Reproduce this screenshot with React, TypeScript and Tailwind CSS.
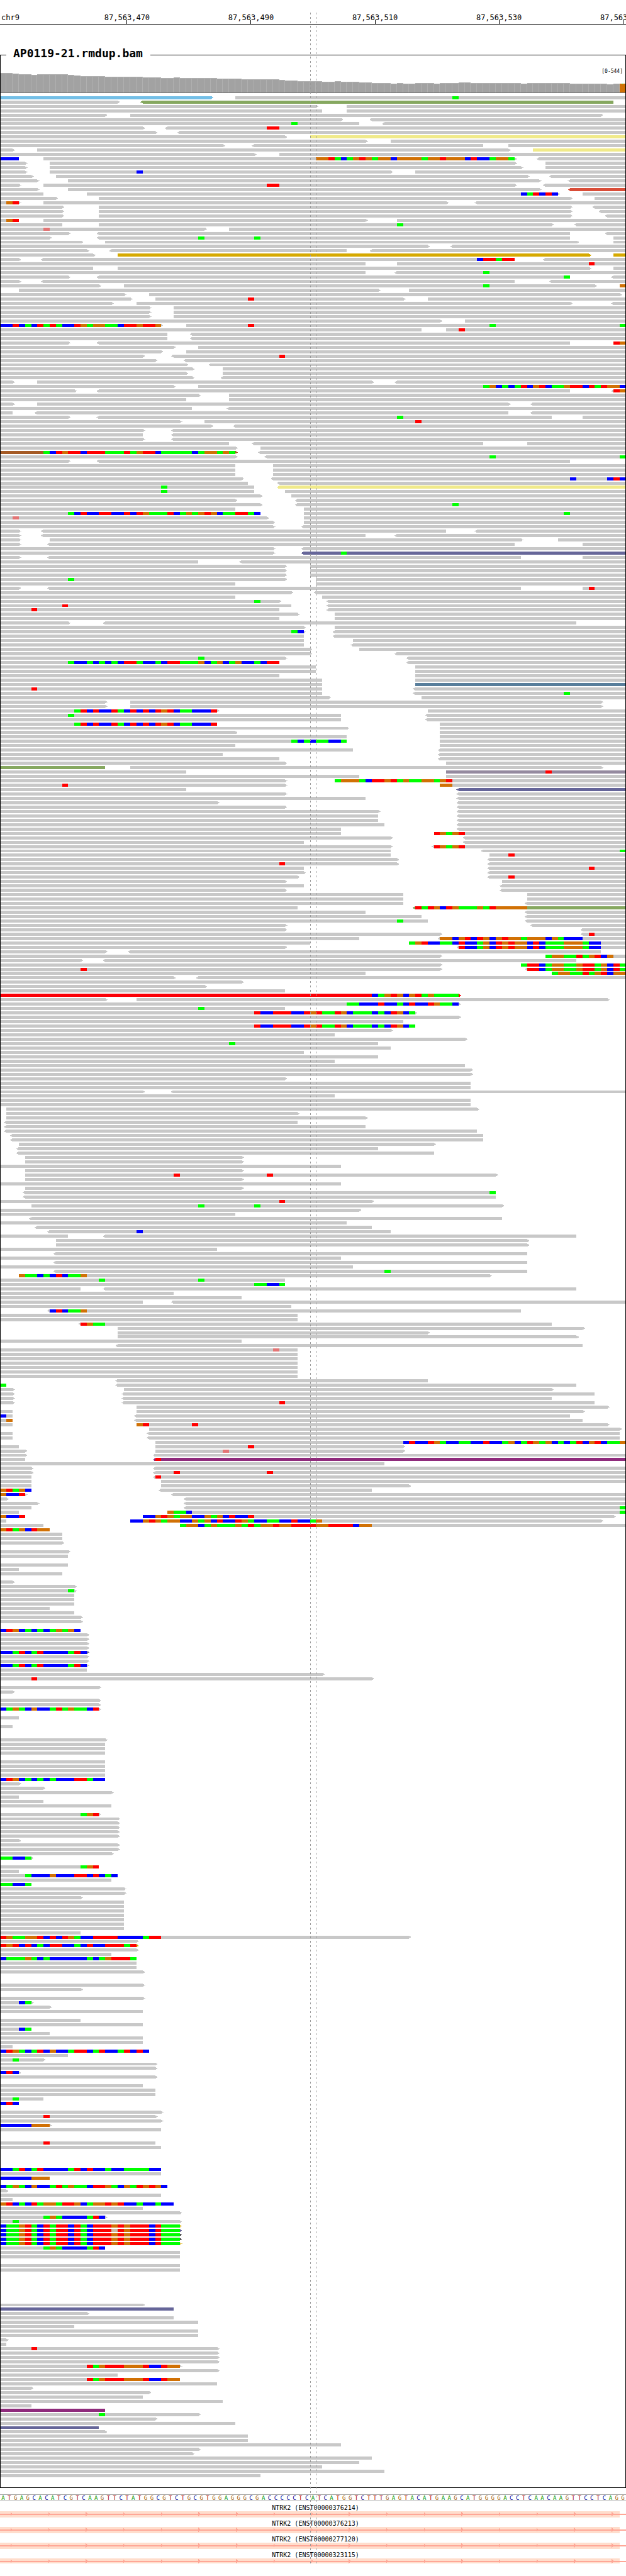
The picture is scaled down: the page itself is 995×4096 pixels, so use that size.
import React from "react";

const BASES = 101;
const VIEW_WIDTH = 1000;
const ROW_PITCH = 7;
const ROW_HEIGHT = 5;
const CHART_TOP = 98;
const CHART_BOTTOM = 3976;
const FIRST_ROW = 154;

const BASE_COLORS: Record<string, string> = {
  A: "#00ff00",
  C: "#0000ff",
  G: "#d17105",
  T: "#ff0000",
  t: "#e37575",
  g: "#ccb8a1",
};

const READ_COLORS: Record<string, string> = {
  sky: "#73bfe7",
  olive: "#86a860",
  khaki: "#f0ea8a",
  gold: "#d6a900",
  coral: "#d94d38",
  slate: "#666699",
  steel: "#587e9b",
  mauve: "#958a9f",
  plum: "#8f2b7c",
  brown: "#a55a24",
  crimson: "#fb0007",
  sand: "#e6cc62",
  coal: "#555555",
};

/*
 * Pileup rows, separated by "|".
 *   a-b       read covering bases a up to b; "<" or ">" marks its strand end
 *   :name     read colour, grey when absent
 *   @nSEQ     mismatched bases starting at n
 *   *n        repeat the row n times
 */
const PILEUP = `
0-34>:sky 38-101 @73A|0-19> <23-99:olive|0-51> 56-101|0-52 56-101|0-17> 21-97>|0-55> <60-101|0-58 <62-101 @47A|0-23> <27-101 @43TT
|0-25> <29-101|0-46> 50-101:khaki|0-59> 63-101|0-36> <41-78 82-101|0-2> 6-82> 86-101:khaki|0-41> 45-101
|0-3 7-83> <87-101 @0CCC @51GGTACAGTGAGGCGGGGAGGTGGGCTCCAGGA|0-4> 8-83> 88-101|0-4> 8-84> 88-101|0-4> 8-63> 67-101 @22C
|0-5> 9-85> <89-101|0-6> 11-87> <92-101|0-3> 7-83> <88-101 @43TT|0-6> 11-87> <92-101:coral|0-7 14-90> 94-101 @84CATCTC
|0-9> 16-92> 96-101|0-3> 7-72> <77-101 @1GT|0-10> 16-92> <96-101|0-10> 16-92> <97-101|0-10> 16-92> <98-101|0-3 7-59> 64-101 @1GT
|0-10 16-89> <93-101 @64A|0-33> 37-101 @7t|0-11> <16-92 <98-101|0-8> <16-92 99-101 @32A @41A|0-13> 17-93> 99-101|0-69> <73-101
|0-14> <18-56 <60-101|0-15> 19-95>:gold 99-101:gold|0-3> <7-83 <88-101 @77CTTATT|0-59 64-101 @95T|0-15 19-95> 99-101
|0-59 <64-101 @78A|0-11> <16-92 <99-101 @91A|0-3> <7-83 <89-101|0-16> 20-96> 100-101 @78A @100G|3-61> 66-101|0-20> 24-100>
|0-21> 25-65> 69-101 @40T|0-18> 22-92> <99-101|0-24> 28-101 *3|0-71> 75-101
|0-26> 30-101 @0CCTCACTATACCTGAGGAACTTGTTG @40T @79A @100A|0-68 72-101 @74T|0-27 <31-101 *2|0-11> <16-92 99-101 @99TG
|0-28> 32-101|0-26> 30-101|0-23> <28-101 @45T|0-25> <30-101|0-30> <34-101|0-31> 36-101|0-30> 36-101|0-31> <36-101
|0-2> 6-60> <64-101|0-28> 32-101 @78AGCACATCGTCAAGTTCTATGGC|0-12> <16-92 <99-101 @99TG|0-32> 37-101|0-30 37-101
|0-2> 6-82> <86-101|0-31 <37-101|0-2 <6-82 <86-101|0-11> <16-89 94-101 @64A|0-29> 33-101 @67T|0-34> <38-101
|0-23> <28-101|0-23 <28-101|0-23> <28-101|0-37 <41-78 85-101|0-38> 42-101
|0-38>:brown <42-101 @7ACTGTTCTTTAAATAGTTCAAAAACAGGAGA|0-38> <43-101 @79A @100A|0-11> <16-92|0-38 44-101 *3
|0-39> <44-101 @92C @98CTC|0-40 <45-101|0-41 <45-101:khaki @26A|0-41 46-101 @26A|0-42> 47-101|0-38> <48-101
|0-42> <48-101 @73A|0-38 49-101|0-42 49-101 @91A @11ACTCCTTCCTCTGAAATCAGAGTGCAATTAC|0-43> 49-101 @2t|0-44> 49-101
|0-44> <49-101|0-3> <7-72 <77-101|0-3> <7-59 <64-101|0-3> 8-84> 90-101|0-3> <8-83 94-101|0-44> <49-101
|0-44> <49-101:slate @55A|0-3> <8-84 94-101|0-32 <39-101|0-46> 50-101 *3|0-46> 51-101 @11A|0-38 51-101
|0-3> <8-84 94-101 @95T|0-47> <51-101|0-38 52-101|0-45> <53-101 @41A|0-47 <53-101 @10T|0-45 <53-101 @5T|0-48> 54-101
|0-45 54-101|0-11> <17-93|0-49> 54-101|0-49> <54-101 @47AC|0-49 <54-101|0-49 57-101|0-49 <57-101|0-50> 58-101|0-50> <64-101
|0-46> <66-101 @32A|0-45 <66-101 @11ACCACACACTTACCACTTAAAGCAGCAGCCACTT|0-51 67-101 *2|0-45 67-101|0-52 67-101|0-52 67-101:steel
|0-52 <67-101 @5T|0-52 <67-101 @91A|0-53> 68-101|0-17> 21-97> *2|0-35> 69-101 @12ATCTCCTACTCTCTGTCAACCCT
|0-55 <69-101 @11A|0-55 <69-101|0-35 71-101 @12ATCTCCTACTCTCTGTCAACCCT|0-56> 71-101|0-38> 71-101|0-56 71-101
|0-56 71-101 @47ACACAACCA|0-38 71-101|0-57 <71-101|0-36 <71-101|0-45 <71-101|0-46> 72-101|0-17:olive 21-97>
|0-30 72-101:mauve @88T|0-58 72-101|0-46> 54-101 @54AGGGACTTGTAGAAGGAGT|0-46> 71-101 @71GG @10T|0-30 <74-101:slate
|0-46> <74-101|0-59 <74-101|0-35> <74-101|0-46> <74-101|0-61> <74-101|0-61 <74-101 *2|0-62 <74-101|0-55 <74-101
|0-55 70-101 @70TGAGT|0-63> <75-101|0-49 <75-101|0-63> <70-101 @70TGAGT|0-63 <78-101 @100A|0-63 79-101 @82T
|0-64> <79-101|0-64> <79-101 @45T|0-49 <79-101 @95T|0-49> <79-101|0-48> <79-101 @82T|0-46> 81-101|0-49 <81-101
|0-46> <81-101|0-65 85-101 *2|0-65 <85-101|0-48 <67-101:olive @67TATGCTGAAAGATGGGGG|0-59 <85-101|0-68 <85-101
|0-69 <85-101 @64A|0-46> <86-101|0-46> <94-101|0-71> <94-101 @95T|0-58 <71-101 @71GGCGTCTGCGTGGAGGGCGACCC
|0-50 66-101 @66AGTCCAACTCCAGCTGTGGCTCAAAGGGACC|0-46> <74-101 @74TCCAGCTGTGGCTCAAAGGGACC|0-17> <21-97
|0-71> 88-101 @88AGGAATAGTCG|0-13> <17-93|0-71> 84-101 @84ATTCAGGAAGTTAGCTA|0-71> <85-101 @13T @85TTCAGGAAGTTAGCTA
|0-59 89-101 @89AGGAATAGTCGG|0-28> <32-101|0-39>|0-33>|0-46|0-74>:crimson @60CAGTGCGTAGAAAA|0-17> 22-98>
|0-74> @56AACCCTCCACTCCTGAAC|0-46 @32A|0-67> @41TCCTTTCCTGTAATGCAAACACTGCA|0-74>|0-65|0-67 @41TCCTTTCCTGTAATGCAAACACTGCA
|0-63>|0-54|0-75>|0-61 @37A|0-63|0-49|0-61|0-54|0-75|0-76> *2|0-46>|0-76 *2|0-23> <28-101|0-54|0-76 *2
|1-77>|1-48>|1-59>|<1-48|<1-59|<1-77|<2-78 *2|3-70>|<3-61|<3-70|4-39> *2|0-55|4-39>|4-80> @28T @43T|4-39>|0-55|4-39>
|<4-80 @79A|<4-80|0-60> @45T|5-81> @32A @41A|0-58>|0-38|<5-81|0-56|<6-60|<8-63 @22C|0-11 <17-93|9-85> *2|0-35
|<9-85|0-55|<9-85|0-57|<9-85 @62A|3-79> @3GAACACTCAAG|0-46 @16A @32A|0-46 @41AACCA|0-13 <17-93|0-28|0-39
|0-23 <28-101|0-47|<8-84 @8CTCAAG|0-48 *2|<13-89 @13TGAA|19-94>|19-69>|19-93>|0-39|<19-94|0-48 @44t|0-48 *6
|<19-69|0-1 <19-93 @0A|0-2> 20-89>|0-2> <20-96|0-2> <20-89|0-2> <20-96 @45T|22-98>|0-2 22-94>|0-2 <22-92 @0C
|0-2 <22-94 @1G|0-2 22-98> @22GT @31T|24-100>|0-2 <24-100 *2|25-101 @65CTCCTGACCAACCTCCAGCATGAGCACATCGTCAAG
|0-3 25-65> @40T|0-4> 25-65> @36t|0-4> <25-101|0-4 <25-101:plum @25T|0-62|0-5> <25-101|0-5> <25-101 @28T @43T
|0-5 <25-101 @25T|0-5 26-101|0-5 26-66>|0-5 <26-60 @0GTAGC|0-4> <28-101 @0GCCT|0-1> <30-101|0-6> <30-101
|0-5 <30-101 @100A|0-3 27-101 @27GAAC @100A|0-4 23-99> @0GCCT @23CCGTGAGGCCGAGCTCCT
|0-1 21-97> @21CCGTGAGGCCGAGCTCCTGACCAACCTCCAG|0-7 29-101 @29AGGCAGAAAGATAGGTGGTTTTGGTTTTCGG|0-8 @0GTAGCTGG
|0-10 *2|0-10>|-|0-11>|0-11|-|0-11|0-3|0-10|-|0-2>|0-12>|0-12> @11A|0-12 *3|0-8|0-12|0-13> *2|-|0-13 @0CTGCACACAGAGC
|0-14> *4|0-14>:slate @0CCATCATCCCCATC|0-14> *2|0-14> @0CCATCATCCCCATC|0-14|0-52>|0-60> @5T|-|0-16>|0-2>|-|0-16> *2
|0-16> @0CAGACGCCATAGAACT|-|0-3|-|0-2|- *2|0-17>|0-17 *3|-|0-17 *4|0-17 @0CTGCACACACCCTTACC|0-3>|0-7>|0-18>
|0-3|0-7|0-18|-|0-16> @13AGT|0-19> *5|0-3>|0-19> *2|0-18>|0-5> @0AACCA|-|0-16 @13AGT|0-3|0-19 @4ACCCGCCCTTCTCAC
|0-18|0-5 @0AACCA|0-20> *2|0-13>|0-20 *7|0-13|0-66> @0TGAAGGTCTCTGACCTTTTCCCCATT|0-22>
|0-22>:gold @0TGTCTCACTTCCACTCCTTTAT|0-22>|0-18|0-22 @0CAAAGACACCCCCCACAGTTTA|0-22 *2|0-23>|- *2|0-23>|0-13>|-|0-23>
|0-5> @3CA|0-8>|0-23|-|0-13|0-23|0-5 @3CA|0-8|0-23 *2|0-2|0-24 @0CTGACATCGCCATTCATCCATCTC|0-11|0-7> @2A|0-25> *2
|0-3> @0CTC|0-25>|-|0-23|0-25 *2|0-7 @2A|0-3 @0CTC|-|0-26>|0-25> @7T|0-26>|0-8> @0CCCCCGGG|0-26|- *2|0-25 @7T|0-26
|- *4|0-26 @0CCATCATCCCCATCTCCACCAAAACC|0-26|0-8 @0CCCCCGGG|-|0-27 @0CAGACGCCATAGAACTTGACGATGTGC|0-1>|0-26|0-2
|0-28 @0GTCACTAGGATTGCAGGTGTCCACCACC|0-23|0-29>|0-17> @7AGACCCCATC|0-29> @2A
|0-29>:sand @0CAAGTACTATTCTACTTTGTGTTTCTAAA|0-29>:slate @0CAAGTACTATTCTACTTTgTGTTTCTAAA
|0-29>:coal @0CAAGTACTATTCTACTTTGTGTTTCTAAA *2|0-29>:sand @0CAAGTACTATTCTACTTTGTGTTTCTAAA|0-17 @7AGACCCCATC
|0-29 *2|-|0-29 *2|- *7|0-23>|0-28:slate|0-14>|0-28|0-32|0-12|0-32 *2|0-1>|0-1|0-35> @5T|0-35> *3
|0-29> @14TAGTTTGGGTCCTGG|0-35>|0-19|0-29 @14TAGTTTGGGTCCTGG|0-35|0-5>|0-24>|0-23|0-36|0-5|0-17:plum|0-32> @16A
|0-25>|0-38|0-16:slate|0-17>|0-40 *2|0-55|0-32>|0-31>|0-60|0-58|0-52|0-62|0-42
`;

type Read = { start: number; end: number; left: boolean; right: boolean; color: string };
type Run = { start: number; end: number; color: string };
type Row = { reads: Read[]; runs: Run[] };

function splitRuns(start: number, letters: string): Run[] {
  const runs: Run[] = [];
  letters.split("").forEach((letter, i) => {
    const last = runs[runs.length - 1];
    if (last && last.color === BASE_COLORS[letter]) last.end += 1;
    else runs.push({ start: start + i, end: start + i + 1, color: BASE_COLORS[letter] });
  });
  return runs;
}

function parseRows(source: string): Row[] {
  const rows: Row[] = [];
  source.split("|").forEach((text) => {
    const row: Row = { reads: [], runs: [] };
    let repeat = 1;
    text
      .trim()
      .split(/\s+/)
      .forEach((token) => {
        if (token.startsWith("*")) {
          repeat = Number(token.slice(1));
          return;
        }
        const mismatch = /^@(\d+)([A-Za-z]+)$/.exec(token);
        if (mismatch) {
          row.runs.push(...splitRuns(Number(mismatch[1]), mismatch[2]));
          return;
        }
        const read = /^(<?)(\d+)-(\d+)(>?)(?::(\w+))?$/.exec(token);
        if (read) {
          row.reads.push({
            start: Number(read[2]),
            end: Number(read[3]),
            left: read[1] === "<",
            right: read[4] === ">",
            color: read[5] ? READ_COLORS[read[5]] : "#c8c8c8",
          });
        }
      });
    for (let i = 0; i < repeat; i += 1) rows.push(row);
  });
  return rows;
}

const ROWS = parseRows(PILEUP);

/* Coverage profile as [top of bar, number of bases] pairs. */
const COVERAGE: [number, number][] = [
  [117, 2], [118, 1], [119, 2], [120, 1], [119, 5], [120, 1], [121, 1], [122, 4], [123, 6], [124, 3],
  [125, 2], [124, 1], [125, 6], [126, 4], [127, 6], [128, 1], [129, 2], [130, 4], [131, 2], [130, 1],
  [131, 3], [132, 2], [133, 3], [134, 1], [133, 1], [134, 2], [133, 3], [134, 1], [133, 3], [132, 2],
  [133, 8], [134, 1], [133, 7], [134, 6], [135, 1], [134, 1],
];
const COVERAGE_TOPS = COVERAGE.flatMap(([top, count]) => Array.from({ length: count }, () => top));

const SEQUENCE =
  "ATGAGCACATCGTCAAGTTCTATGGCGTCTGCGTGGAGGGCGACCCCCTCATCATGGTCTTTGAGTACATGAAGCATGGGGACCTCAACAAGTTCCTCAGG";

const LETTER_CLASSES: Record<string, string> = {
  A: "text-[#009600]",
  C: "text-[#000096]",
  G: "text-[#a4610a]",
  T: "text-[#a80000]",
};

const TICKS = [
  { label: "87,563,470", column: 21 },
  { label: "87,563,490", column: 41 },
  { label: "87,563,510", column: 61 },
  { label: "87,563,530", column: 81 },
  { label: "87,563,550", column: 101 },
];

const TRANSCRIPTS = ["ENST00000376214", "ENST00000376213", "ENST00000277120", "ENST00000323115"];

const xOf = (base: number) =>
  Math.min(VIEW_WIDTH - 1, Math.max(1, Math.round((base * VIEW_WIDTH) / BASES)));

function Ruler() {
  return (
    <header className="grid h-[39px] grid-cols-[repeat(101,minmax(0,1fr))] overflow-hidden border-b border-black pt-[21px] text-[12px] leading-[14px]">
      <span className="col-start-1 row-start-1 pl-[2px]">chr9</span>
      {TICKS.map((tick) => (
        <div
          key={tick.label}
          className="row-start-1 flex flex-col items-center whitespace-nowrap"
          style={{ gridColumnStart: tick.column }}
        >
          <span className="h-[11px]">{tick.label}</span>
          <span className="h-[7px] w-px bg-black" />
        </div>
      ))}
    </header>
  );
}

function Coverage() {
  return (
    <g>
      {COVERAGE_TOPS.map((top, i) => {
        const x = xOf(i);
        const width = xOf(i + 1) - x;
        return (
          <g key={i}>
            <rect x={x} y={top} width={width} height={148 - top} fill="#b0b0b0" />
            <rect x={x} y={top + 1} width={width - 1} height={147 - top} fill="#a2a2a2" />
          </g>
        );
      })}
      <rect x={xOf(100)} y={134} width={9} height={14} fill="#d17105" />
      <rect x={994} y={134} width={1} height={1} fill="#00ff00" />
      <rect x={1} y={148} width={998} height={1} fill="#757575" />
    </g>
  );
}

function PileupRow({ row, y }: { row: Row; y: number }) {
  return (
    <g>
      {row.reads.map((read, i) => {
        const x1 = xOf(read.start);
        const x2 = xOf(read.end);
        return (
          <g key={i} fill={read.color}>
            <rect x={x1} y={y} width={x2 - x1} height={ROW_HEIGHT} />
            {read.left && <path d={`M${x1} ${y}l-4 2.5l4 2.5z`} />}
            {read.right && <path d={`M${x2} ${y}l4 2.5l-4 2.5z`} />}
          </g>
        );
      })}
      {row.runs.map((run, i) => (
        <rect
          key={i}
          x={xOf(run.start)}
          y={y}
          width={xOf(run.end) - xOf(run.start)}
          height={ROW_HEIGHT}
          fill={run.color}
        />
      ))}
    </g>
  );
}

function Alignments() {
  return (
    <fieldset className="relative mt-[38px] border border-black">
      <legend className="ml-[9px] pr-[12px] pb-[4px] pl-[11px] text-[18px] leading-[16px] font-bold">
        AP0119-21.rmdup.bam
      </legend>
      <span className="absolute top-[13px] right-[4px] text-[8px] leading-[8px]">[0-544]</span>
      <svg
        className="block h-[3858px] w-full"
        viewBox={`1 ${CHART_TOP} 998 ${CHART_BOTTOM - CHART_TOP}`}
        preserveAspectRatio="none"
        shapeRendering="crispEdges"
        role="img"
        aria-label="Read alignments"
      >
        <Coverage />
        {ROWS.map((row, i) => (
          <PileupRow key={i} row={row} y={FIRST_ROW + i * ROW_PITCH} />
        ))}
      </svg>
    </fieldset>
  );
}

function Reference() {
  return (
    <div className="mt-[10px] grid h-[11px] grid-cols-[repeat(101,minmax(0,1fr))] border-y border-[#a9a9a9] text-center text-[9px] leading-[10px]">
      {SEQUENCE.split("").map((letter, i) => (
        <span key={i} className={LETTER_CLASSES[letter]}>
          {letter}
        </span>
      ))}
    </div>
  );
}

function Transcript({ name }: { name: string }) {
  return (
    <li className="h-[25px]">
      <p className="h-[16px] pt-[6px] pl-[8px] text-center text-[10px] leading-[10px]">NTRK2 ({name})</p>
      <svg
        className="block h-[10px] w-full"
        viewBox="0 0 1000 10"
        preserveAspectRatio="none"
        shapeRendering="crispEdges"
        aria-hidden="true"
      >
        <rect x="0" y="0" width="990" height="10" fill="#ffddcc" />
        <rect x="0" y="4" width="1000" height="2" fill="#ffa797" />
        {Array.from({ length: 17 }, (_, i) => (
          <path key={i} d={`M${17 + i * 60} 1v7l3.5 -3.5z`} fill="#ffa797" />
        ))}
      </svg>
    </li>
  );
}

export default function App() {
  return (
    <main className="relative overflow-hidden bg-white pb-[20px] font-['DejaVu_Sans_Mono',monospace] text-black">
      <Ruler />
      <Alignments />
      <Reference />
      <ul className="h-[99px] overflow-hidden">
        {TRANSCRIPTS.map((name) => (
          <Transcript key={name} name={name} />
        ))}
      </ul>
      <div className="absolute top-[20px] bottom-[20px] left-[49.5%] w-px bg-[repeating-linear-gradient(to_bottom,#999_0_3px,transparent_3px_7px)]" />
      <div className="absolute top-[20px] bottom-[20px] left-[50.5%] w-px bg-[repeating-linear-gradient(to_bottom,#999_0_3px,transparent_3px_7px)]" />
    </main>
  );
}
